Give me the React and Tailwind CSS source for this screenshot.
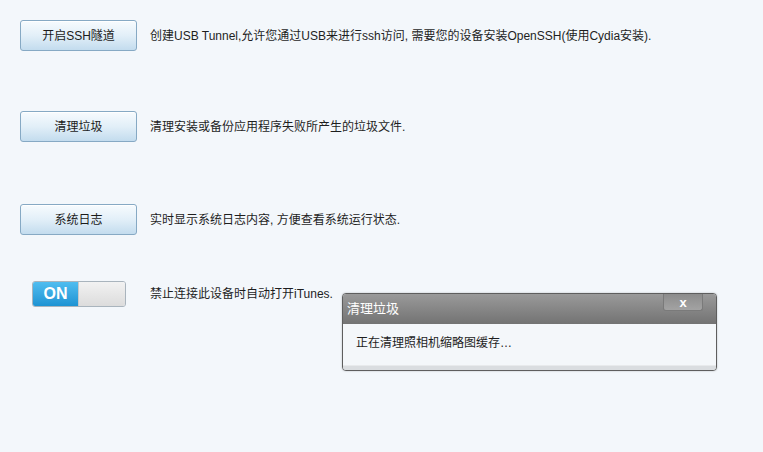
import React from "react";

const font = { fontFamily: '"Liberation Sans", "Noto Sans CJK SC", sans-serif' };

function ActionButton({ label }) {
  return (
    <button
      className="w-[117px] h-[31px] shrink-0 rounded-[3px] border border-[#86a9c4] bg-gradient-to-b from-[#f7fbfe] via-[#e2eff8] to-[#c3dcee] text-[12px] text-[#1b1b1b] shadow-[inset_0_1px_0_#ffffff]"
    >
      {label}
    </button>
  );
}

export default function App() {
  const rows = [
    { label: "开启SSH隧道", text: "创建USB Tunnel,允许您通过USB来进行ssh访问, 需要您的设备安装OpenSSH(使用Cydia安装).", mt: "mt-0" },
    { label: "清理垃圾", text: "清理安装或备份应用程序失败所产生的垃圾文件.", mt: "mt-[60px]" },
    { label: "系统日志", text: "实时显示系统日志内容, 方便查看系统运行状态.", mt: "mt-[62px]" },
  ];

  return (
    <div className="relative w-[763px] h-[452px] bg-[#f3f7fb] overflow-hidden" style={font}>
      <div className="flex flex-col pt-[20px] pl-[20px]">
        {rows.map((r) => (
          <div key={r.label} className={`flex items-center gap-[13px] ${r.mt}`}>
            <ActionButton label={r.label} />
            <span className="text-[12px] text-[#1e1e1e] leading-none">{r.text}</span>
          </div>
        ))}

        {/* Toggle row */}
        <div className="flex items-center mt-[46px] pl-[12px]">
          <div className="flex w-[94px] h-[26px] rounded-[3px] border border-[#a9b4bd] overflow-hidden">
            <div className="w-[45px] flex items-center justify-center bg-gradient-to-b from-[#4fbdf0] to-[#1c93d3] text-white text-[16px] font-bold">
              ON
            </div>
            <div className="flex-1 bg-gradient-to-b from-[#f2f2f2] to-[#dcdcdc] border-l border-[#c9c9c9]" />
          </div>
          <span className="ml-[24px] text-[12px] text-[#1e1e1e] leading-none">禁止连接此设备时自动打开iTunes.</span>
        </div>
      </div>

      {/* Progress dialog */}
      <div className="absolute left-[342px] top-[293px] w-[375px] h-[78px] rounded-[4px] border border-[#5e5e5e] bg-[#f4f7fa] overflow-hidden flex flex-col shadow-[0_0_2px_rgba(0,0,0,0.25)]">
        <div className="relative h-[30px] shrink-0 bg-gradient-to-b from-[#9a9a9a] to-[#737373] flex items-center pl-[4px]">
          <span className="text-white text-[13px]">清理垃圾</span>
          <div className="absolute right-[13px] top-0 w-[40px] h-[17px] rounded-b-[3px] border border-t-0 border-[#7a7a7a] bg-gradient-to-b from-[#8c8c8c] to-[#a3a3a3] flex items-center justify-center">
            <span className="text-white text-[13px] font-bold leading-none">x</span>
          </div>
        </div>
        <div className="flex-1 flex items-center pl-[13px] pb-[3px]">
          <span className="text-[12px] text-[#1e1e1e]">正在清理照相机缩略图缓存…</span>
        </div>
        <div className="h-[5px] shrink-0 bg-[#dadde0] border-t border-[#e8eaec]" />
      </div>
    </div>
  );
}
